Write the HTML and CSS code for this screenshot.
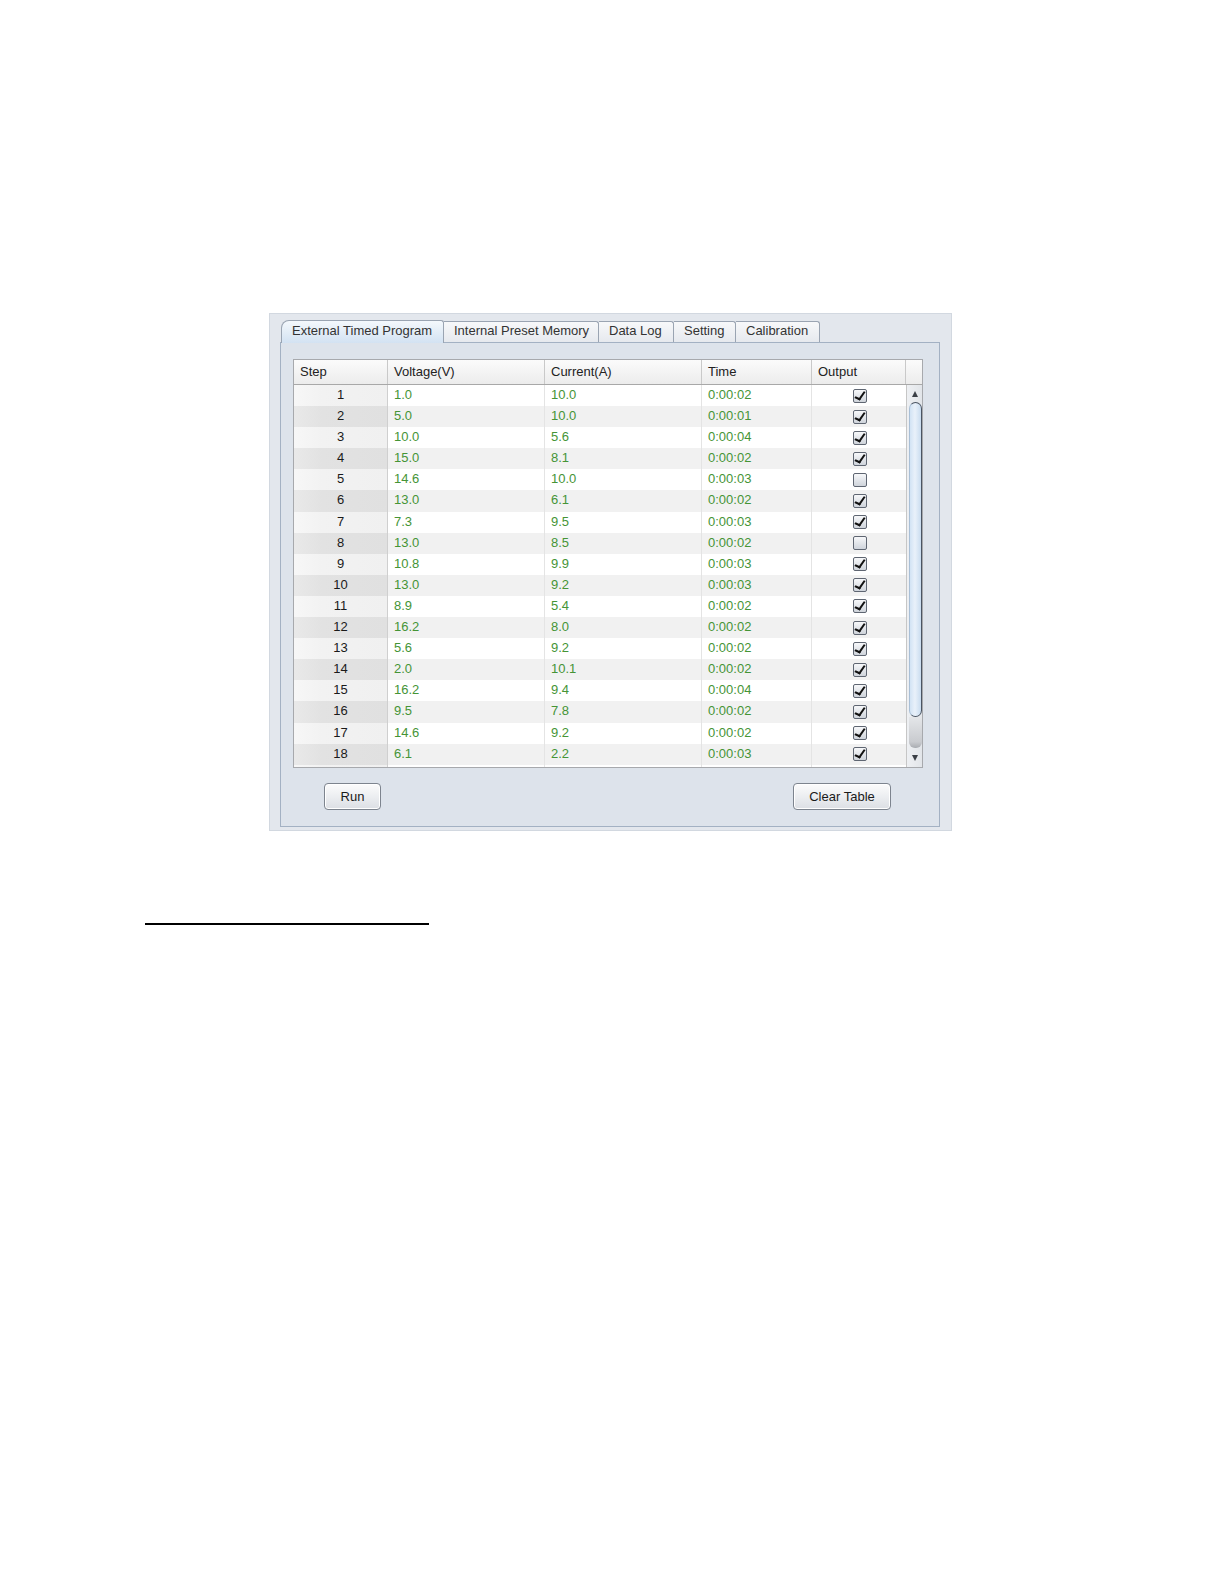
FILE: index.html
```html
<!DOCTYPE html>
<html>
<head>
<meta charset="utf-8">
<link rel="stylesheet" href="styles.css">
</head>
<body>
<div class="page">
  <div class="window">
    <div class="tabs">
      <div class="tab active">External Timed Program</div>
      <div class="tab">Internal Preset Memory</div>
      <div class="tab">Data Log</div>
      <div class="tab">Setting</div>
      <div class="tab">Calibration</div>
    </div>
    <div class="content">
      <div class="table">
        <div class="thead">
          <div class="th c-step">Step</div>
          <div class="th c-volt">Voltage(V)</div>
          <div class="th c-cur">Current(A)</div>
          <div class="th c-time">Time</div>
          <div class="th c-out">Output</div>
          <div class="th c-sb"></div>
        </div>
        <div class="tbody">
          <div class="rows">
            <div class="row"><div class="td c-step">1</div><div class="td c-volt">1.0</div><div class="td c-cur">10.0</div><div class="td c-time">0:00:02</div><div class="td c-out"><span class="cb on"></span></div></div>
            <div class="row"><div class="td c-step">2</div><div class="td c-volt">5.0</div><div class="td c-cur">10.0</div><div class="td c-time">0:00:01</div><div class="td c-out"><span class="cb on"></span></div></div>
            <div class="row"><div class="td c-step">3</div><div class="td c-volt">10.0</div><div class="td c-cur">5.6</div><div class="td c-time">0:00:04</div><div class="td c-out"><span class="cb on"></span></div></div>
            <div class="row"><div class="td c-step">4</div><div class="td c-volt">15.0</div><div class="td c-cur">8.1</div><div class="td c-time">0:00:02</div><div class="td c-out"><span class="cb on"></span></div></div>
            <div class="row"><div class="td c-step">5</div><div class="td c-volt">14.6</div><div class="td c-cur">10.0</div><div class="td c-time">0:00:03</div><div class="td c-out"><span class="cb"></span></div></div>
            <div class="row"><div class="td c-step">6</div><div class="td c-volt">13.0</div><div class="td c-cur">6.1</div><div class="td c-time">0:00:02</div><div class="td c-out"><span class="cb on"></span></div></div>
            <div class="row"><div class="td c-step">7</div><div class="td c-volt">7.3</div><div class="td c-cur">9.5</div><div class="td c-time">0:00:03</div><div class="td c-out"><span class="cb on"></span></div></div>
            <div class="row"><div class="td c-step">8</div><div class="td c-volt">13.0</div><div class="td c-cur">8.5</div><div class="td c-time">0:00:02</div><div class="td c-out"><span class="cb"></span></div></div>
            <div class="row"><div class="td c-step">9</div><div class="td c-volt">10.8</div><div class="td c-cur">9.9</div><div class="td c-time">0:00:03</div><div class="td c-out"><span class="cb on"></span></div></div>
            <div class="row"><div class="td c-step">10</div><div class="td c-volt">13.0</div><div class="td c-cur">9.2</div><div class="td c-time">0:00:03</div><div class="td c-out"><span class="cb on"></span></div></div>
            <div class="row"><div class="td c-step">11</div><div class="td c-volt">8.9</div><div class="td c-cur">5.4</div><div class="td c-time">0:00:02</div><div class="td c-out"><span class="cb on"></span></div></div>
            <div class="row"><div class="td c-step">12</div><div class="td c-volt">16.2</div><div class="td c-cur">8.0</div><div class="td c-time">0:00:02</div><div class="td c-out"><span class="cb on"></span></div></div>
            <div class="row"><div class="td c-step">13</div><div class="td c-volt">5.6</div><div class="td c-cur">9.2</div><div class="td c-time">0:00:02</div><div class="td c-out"><span class="cb on"></span></div></div>
            <div class="row"><div class="td c-step">14</div><div class="td c-volt">2.0</div><div class="td c-cur">10.1</div><div class="td c-time">0:00:02</div><div class="td c-out"><span class="cb on"></span></div></div>
            <div class="row"><div class="td c-step">15</div><div class="td c-volt">16.2</div><div class="td c-cur">9.4</div><div class="td c-time">0:00:04</div><div class="td c-out"><span class="cb on"></span></div></div>
            <div class="row"><div class="td c-step">16</div><div class="td c-volt">9.5</div><div class="td c-cur">7.8</div><div class="td c-time">0:00:02</div><div class="td c-out"><span class="cb on"></span></div></div>
            <div class="row"><div class="td c-step">17</div><div class="td c-volt">14.6</div><div class="td c-cur">9.2</div><div class="td c-time">0:00:02</div><div class="td c-out"><span class="cb on"></span></div></div>
            <div class="row"><div class="td c-step">18</div><div class="td c-volt">6.1</div><div class="td c-cur">2.2</div><div class="td c-time">0:00:03</div><div class="td c-out"><span class="cb on"></span></div></div>
            <div class="row"><div class="td c-step"></div><div class="td c-volt"></div><div class="td c-cur"></div><div class="td c-time"></div><div class="td c-out"></div></div>
          </div>
          <div class="scrollbar">
            <div class="arrow up"></div>
            <div class="thumb"></div>
            <div class="track"></div>
            <div class="arrow down"></div>
          </div>
        </div>
      </div>
      <div class="buttons">
        <button class="btn run">Run</button>
        <button class="btn clear">Clear Table</button>
      </div>
    </div>
  </div>
  <div class="rule"></div>
</div>
</body>
</html>
```
FILE: styles.css
```css
html, body {
  margin: 0;
  padding: 0;
  background: #ffffff;
}
body {
  font-family: "Liberation Sans", Arial, sans-serif;
  font-size: 13px;
  color: #1a1a1a;
}
.page {
  padding: 313px 0 0 269px;
}
.window {
  width: 683px;
  height: 518px;
  box-sizing: border-box;
  background: #e3e7ed;
  border: 1px solid #d2d8e0;
  padding: 6px 11px 3px 10px;
  display: flex;
  flex-direction: column;
}
.tabs {
  display: flex;
  height: 22px;
  padding-left: 1px;
  position: relative;
  z-index: 1;
}
.tab {
  box-sizing: border-box;
  height: 21px;
  padding: 0 6px 0 10px;
  line-height: 17px;
  border: 1px solid #9aa4b2;
  border-bottom: none;
  border-left-width: 0;
  border-radius: 0 3px 0 0;
  background: linear-gradient(#f7f8fa, #e6e9ee);
  color: #333333;
  white-space: nowrap;
  margin-top: 1px;
}
.tab:nth-child(2) { width: 155px; }
.tab:nth-child(3) { width: 75px; }
.tab:nth-child(4) { width: 62px; }
.tab:nth-child(5) { width: 84px; }
.tab.active {
  width: 163px;
  border-left-width: 1px;
  border-radius: 8px 3px 0 0;
  background: linear-gradient(#f4f8fc, #d3e2f2);
  height: 23px;
  margin-top: 0;
  margin-bottom: -1px;
  padding-left: 10px;
  line-height: 19px;
}
.content {
  flex: 1;
  box-sizing: border-box;
  border: 1px solid #a3b1c3;
  background: #dde3eb;
  padding: 16px 15px 0 12px;
  display: flex;
  flex-direction: column;
}
.table {
  width: 630px;
  height: 409px;
  box-sizing: border-box;
  border: 1px solid #a7a9ad;
  background: #ffffff;
  display: flex;
  flex-direction: column;
  overflow: hidden;
}
.thead {
  display: flex;
  height: 25px;
  flex: none;
  box-sizing: border-box;
  background: linear-gradient(#fbfbfb, #ececec);
  border-bottom: 1px solid #a8a8a8;
}
.th {
  box-sizing: border-box;
  padding-left: 6px;
  line-height: 23px;
  border-right: 1px solid #c9c9c9;
  color: #222222;
}
.c-step { width: 94px; }
.c-volt { width: 157px; }
.c-cur { width: 157px; }
.c-time { width: 110px; }
.c-out { width: 94px; }
.c-sb { width: 16px; border-right: none; }
.tbody {
  flex: 1;
  display: flex;
  overflow: hidden;
}
.rows {
  width: 612px;
  flex: none;
  overflow: hidden;
}
.row {
  display: flex;
  height: 21.1px;
  line-height: 20px;
  background: #ffffff;
}
.row:nth-child(even) {
  background: #f1f1f1;
}
.td {
  box-sizing: border-box;
  padding-left: 6px;
  border-right: 1px solid #e4e4e4;
  color: #459436;
  white-space: nowrap;
  height: 100%;
}
.td.c-step {
  padding-left: 0;
  text-align: center;
  color: #1a1a1a;
  background: linear-gradient(90deg, #f7f7f7 0%, #f2f2f2 30%, #f0f0f0 100%);
  border-right: 1px solid #cfcfcf;
}
.row:nth-child(even) .td.c-step {
  background: linear-gradient(90deg, #e9e9e9 0%, #e2e2e2 30%, #e0e0e0 100%);
}
.td.c-out {
  padding-left: 0;
  display: flex;
  align-items: center;
  justify-content: center;
  border-right: none;
}
.cb {
  width: 14px;
  height: 14px;
  box-sizing: border-box;
  border: 1px solid #5f6672;
  border-radius: 2px;
  background: linear-gradient(#f7f8fa, #cfd4db);
  position: relative;
  margin-left: 2px;
}
.cb.on::after {
  content: "";
  position: absolute;
  left: 3px;
  top: 0px;
  width: 4px;
  height: 8px;
  border-right: 2px solid #111;
  border-bottom: 2px solid #111;
  transform: rotate(25deg) skewX(-10deg);
  transform-origin: center;
}
.scrollbar {
  width: 16px;
  flex: none;
  box-sizing: border-box;
  border-left: 1px solid #c6c6c6;
  background: linear-gradient(90deg, #eef0f3, #e2e5e9);
  display: flex;
  flex-direction: column;
  align-items: center;
}
.arrow {
  width: 0;
  height: 0;
  border-left: 3px solid transparent;
  border-right: 3px solid transparent;
  flex: none;
}
.arrow.up {
  border-bottom: 6px solid #3b3f46;
  margin-top: 6px;
}
.arrow.down {
  border-top: 6px solid #3b3f46;
  margin-top: 7px;
}
.thumb {
  width: 13px;
  height: 315px;
  box-sizing: border-box;
  margin-top: 5px;
  margin-left: 1px;
  border: 1px solid #4a5462;
  border-left-color: #a9bfd6;
  border-radius: 8px;
  background: linear-gradient(90deg, #d2e3f4 0%, #e9f1fa 45%, #c9dcef 100%);
  flex: none;
}
.track {
  width: 13px;
  height: 31px;
  margin-left: 1px;
  background: linear-gradient(#e4e6e9, #c9cbcf 80%, #a9acb1);
  border-radius: 0 0 6px 6px;
  flex: none;
}
.buttons {
  display: flex;
  justify-content: space-between;
  padding: 15px 33px 0 31px;
}
.btn {
  font-family: "Liberation Sans", Arial, sans-serif;
  font-size: 13px;
  color: #1a1a1a;
  height: 27px;
  box-sizing: border-box;
  border: 1px solid #7d848e;
  border-radius: 4px;
  background: linear-gradient(#fcfcfc, #eceef1 50%, #dcdfe4);
  box-shadow: inset 0 0 0 1px #ffffff;
  padding: 0;
  margin: 0;
}
.btn.run { width: 57px; }
.btn.clear { width: 98px; }
.rule {
  width: 284px;
  height: 2px;
  background: #000000;
  margin: 92px 0 0 -124px;
}
```
